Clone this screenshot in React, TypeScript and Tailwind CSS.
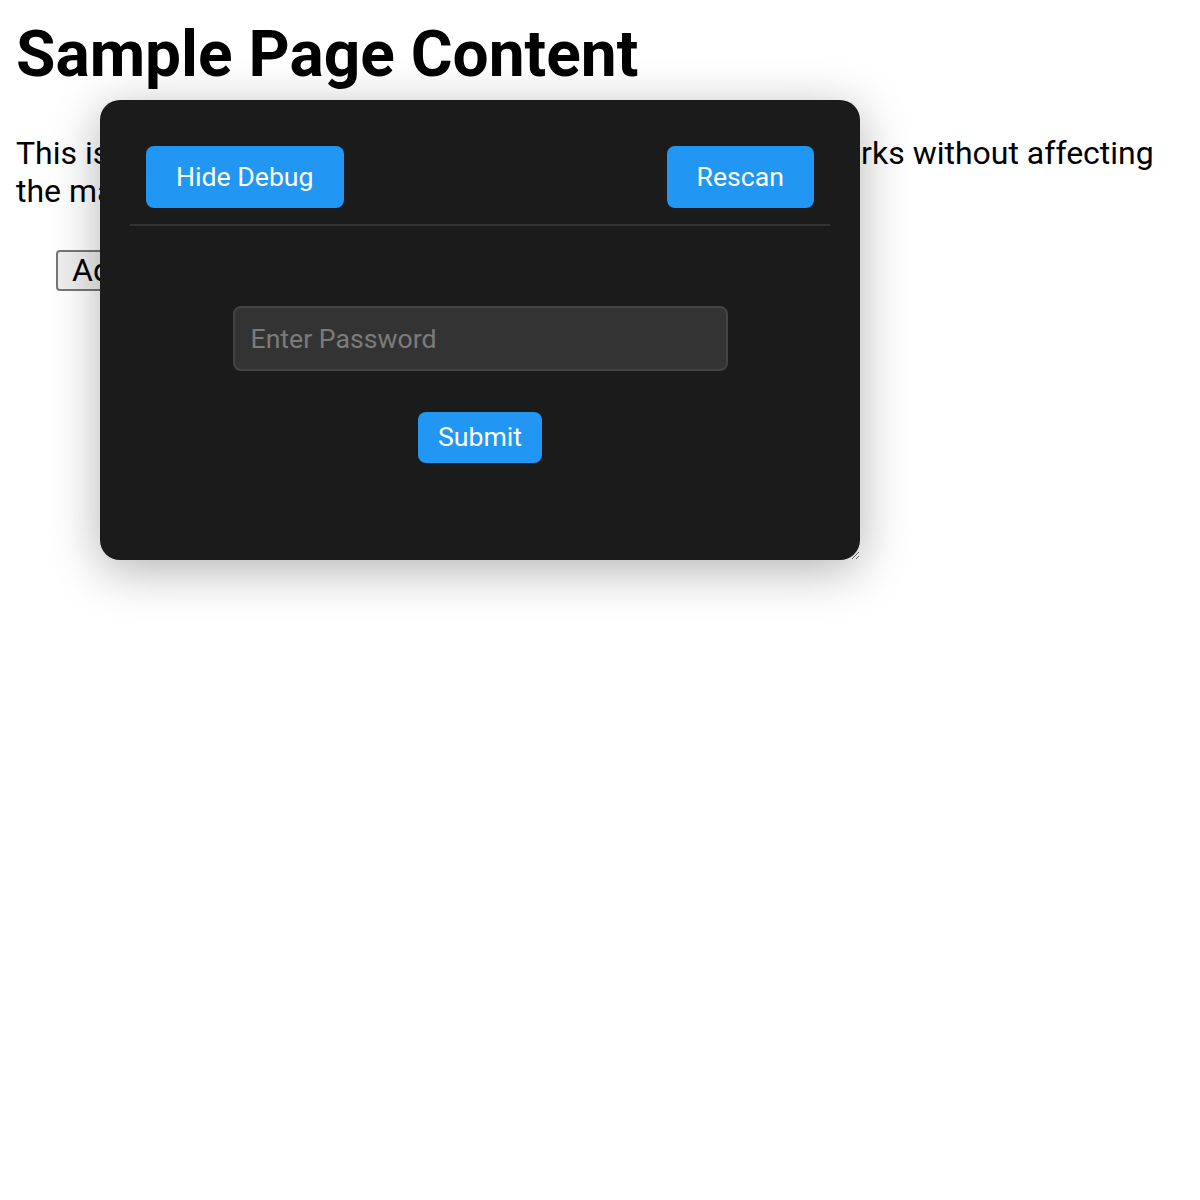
import { useState } from "react"

export default function App() {
  const [password, setPassword] = useState("")

  return (
    <div className="relative min-h-[1200px] bg-white px-4 font-['Roboto','Liberation_Sans',sans-serif] text-black">
      <h1 className="pt-[17px] text-[64px] font-bold leading-[75px]">Sample Page Content</h1>
      <p className="mt-[43px] text-[32px] leading-[37.5px]">
        This is an example page to demonstrate that the overlay works without affecting the main page content.
      </p>
      <div className="mt-[40px] pl-[40px]">
        <button className="rounded-[4px] border-2 border-[#767676] bg-[#efefef] px-[14px] text-[32px] leading-[37px]">
          Add Item
        </button>
      </div>

      {/* Debug overlay */}
      <div className="absolute left-[100px] top-[100px] h-[460px] w-[760px] resize overflow-auto rounded-[20px] bg-[#1b1b1b] p-[30px] text-[26.67px] shadow-[0_10px_50px_rgba(0,0,0,0.3)]">
        <div className="flex items-center justify-between border-b-2 border-[#333] p-4">
          <button className="rounded-lg bg-[#2196f3] px-[30px] py-[15.5px] leading-[31.25px] text-white">Hide Debug</button>
          <button className="rounded-lg bg-[#2196f3] px-[30px] py-[15.5px] leading-[31.25px] text-white">Rescan</button>
        </div>

        <div className="flex flex-col items-center pt-[80px]">
          <input
            type="password"
            value={password}
            onChange={(e) => setPassword(e.target.value)}
            placeholder="Enter Password"
            className="h-[65px] w-[495px] rounded-lg border-2 border-[#444] bg-[#333] px-4 text-white outline-none placeholder:text-[#7b7b7b]"
          />
          <button className="mt-[41px] rounded-lg bg-[#2196f3] px-5 py-[9.5px] leading-[31.25px] text-white">Submit</button>
        </div>
      </div>
    </div>
  )
}
